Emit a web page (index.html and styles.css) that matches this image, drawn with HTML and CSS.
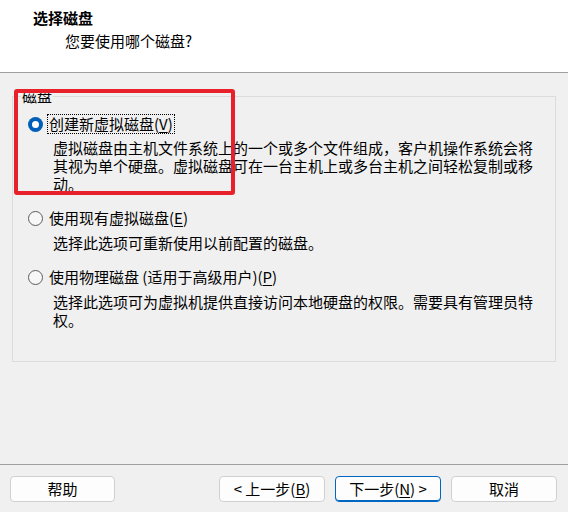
FILE: index.html
```html
<!DOCTYPE html>
<html lang="zh-CN">
<head>
<meta charset="utf-8">
<title>新建虚拟机向导</title>
<link rel="stylesheet" href="styles.css">
</head>
<body>
<div class="window">
  <header class="header">
    <div class="title">选择磁盘</div>
    <div class="subtitle">您要使用哪个磁盘?</div>
  </header>

  <main class="content">
    <section class="group">
      <div class="group-label">磁盘</div>

      <div class="option">
        <span class="radio checked"></span>
        <span class="opt-text focus">创建新虚拟磁盘(<u>V</u>)</span>
      </div>
      <p class="desc first">虚拟磁盘由主机文件系统上的一个或多个文件组成，客户机操作系统会将其视为单个硬盘。虚拟磁盘可在一台主机上或多台主机之间轻松复制或移动。</p>

      <div class="option next-opt">
        <span class="radio"></span>
        <span class="opt-text">使用现有虚拟磁盘(<u>E</u>)</span>
      </div>
      <p class="desc">选择此选项可重新使用以前配置的磁盘。</p>

      <div class="option next-opt">
        <span class="radio"></span>
        <span class="opt-text">使用物理磁盘 (适用于高级用户)(<u>P</u>)</span>
      </div>
      <p class="desc">选择此选项可为虚拟机提供直接访问本地硬盘的权限。需要具有管理员特权。</p>
    </section>
    <div class="highlight"></div>
  </main>

  <footer class="footer">
    <button class="btn help">帮助</button>
    <button class="btn back">&lt;&nbsp;上一步(<u>B</u>)</button>
    <button class="btn primary">下一步(<u>N</u>)&nbsp;&gt;</button>
    <button class="btn">取消</button>
  </footer>
</div>
</body>
</html>
```

FILE: styles.css
```css
* { box-sizing: border-box; }

html, body {
  margin: 0;
  padding: 0;
  background: #f0f0f0;
}

body {
  font-family: "Noto Sans CJK SC", "Noto Sans", sans-serif;
  font-size: 15px;
  color: #000;
}

.window {
  width: 568px;
  height: 512px;
  display: flex;
  flex-direction: column;
  overflow: hidden;
  position: relative;
}

.header {
  height: 73px;
  background: #fff;
  border-bottom: 1px solid #a0a0a0;
  padding: 8px 0 0 33px;
  flex: none;
}

.title {
  font-weight: bold;
  line-height: 20px;
}

.subtitle {
  margin: 3px 0 0 32px;
  line-height: 20px;
}

.content {
  flex: 1;
  position: relative;
  padding: 23px 12px 0 12px;
}

.group {
  position: relative;
  width: 544px;
  height: 266px;
  border: 1px solid #dcdcdc;
  padding: 18px 0 0 15px;
}

.group-label {
  position: absolute;
  left: 8px;
  top: -10px;
  line-height: 18px;
  padding: 0 1px;
  background: #f0f0f0;
}

.option {
  display: flex;
  align-items: center;
  height: 18px;
  line-height: 18px;
}

.next-opt { margin-top: 16px; }

.radio {
  width: 15px;
  height: 15px;
  border-radius: 50%;
  border: 1px solid #5c5c5c;
  background: #f7f7f7;
  flex: none;
  margin-right: 5px;
  position: relative;
}

.radio.checked {
  border: none;
  background: #005fb8;
}

.radio.checked::after {
  content: "";
  position: absolute;
  left: 4px;
  top: 4px;
  width: 7px;
  height: 7px;
  border-radius: 50%;
  background: #fff;
}

.opt-text {
  padding: 0 1px;
  white-space: nowrap;
}

.focus {
  outline: 1px dotted #000;
  outline-offset: 0;
}

.desc {
  margin: 7px 0 0 25px;
  width: 484px;
  line-height: 18px;
}

.desc.first { margin-top: 6px; }

.highlight {
  position: absolute;
  left: 14px;
  top: 16px;
  width: 221px;
  height: 106px;
  border: 4px solid #e8202a;
  border-radius: 3px;
  pointer-events: none;
}

.footer {
  height: 48px;
  flex: none;
  border-top: 1px solid #a0a0a0;
  display: flex;
  align-items: flex-start;
  padding: 11px 11px 0 10px;
  gap: 10px;
}

.btn {
  width: 106px;
  height: 26px;
  font-family: inherit;
  font-size: 15px;
  line-height: 18px;
  color: #000;
  background: #fdfdfd;
  border: 1px solid #d0d0d0;
  border-radius: 4px;
  padding: 0;
}

.btn.help { width: 105px; }
.btn.back { margin-left: auto; }

.btn.primary {
  border: 1px solid #0067c0;
  box-shadow: inset 0 -1px 0 #0067c0;
}

u { text-underline-offset: 2px; }
```
